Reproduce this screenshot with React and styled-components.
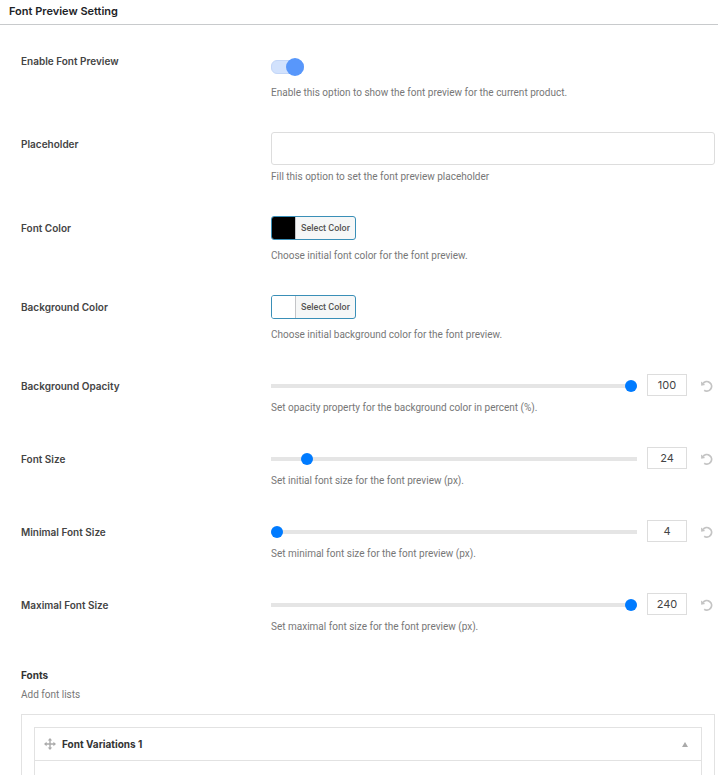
import { useState } from "react";
import styled, { createGlobalStyle } from "styled-components";

const SLIDERS = [
    { id: "opacity", label: "Background Opacity", initial: 100, min: 0, max: 100, help: "Set opacity property for the background color in percent (%)." },
    { id: "size", label: "Font Size", initial: 24, min: 4, max: 240, help: "Set initial font size for the font preview (px)." },
    { id: "min-size", label: "Minimal Font Size", initial: 4, min: 4, max: 240, help: "Set minimal font size for the font preview (px)." },
    { id: "max-size", label: "Maximal Font Size", initial: 240, min: 4, max: 240, help: "Set maximal font size for the font preview (px)." },
];

const COLORS = [
    { id: "font-color", label: "Font Color", color: "#000000", help: "Choose initial font color for the font preview." },
    { id: "bg-color", label: "Background Color", color: "#ffffff", help: "Choose initial background color for the font preview." },
];

const ResetIcon = () => (
    <svg width="13" height="12" viewBox="0 0 13 12" fill="none" aria-hidden="true">
        <path d="M3 3.6A4.7 4.7 0 1 1 4.2 10.2" stroke="currentColor" strokeWidth="1.8" />
        <path d="M1 1.6L1.2 5.8L5.2 5Z" fill="currentColor" />
    </svg>
);

const MoveIcon = () => (
    <svg width="12" height="12" viewBox="0 0 12 12" fill="currentColor" aria-hidden="true">
        <path d="M6 0L8.2 2.6H6.7V5.3H9.4V3.8L12 6L9.4 8.2V6.7H6.7V9.4H8.2L6 12L3.8 9.4H5.3V6.7H2.6V8.2L0 6L2.6 3.8V5.3H5.3V2.6H3.8Z" />
    </svg>
);

const SliderField = ({ id, label, initial, min, max, help }) => {
    const [value, setValue] = useState(initial);
    const handleChange = (e) => setValue(e.target.value);

    return (
        <Row>
            <Label htmlFor={id}>{label}</Label>
            <div>
                <SliderControl>
                    <Range type="range" id={id} min={min} max={max} value={value} onChange={handleChange} />
                    <NumberInput type="text" inputMode="numeric" aria-label={label + " value"} value={value} onChange={handleChange} />
                    <ResetButton type="button" aria-label={"Reset " + label} onClick={() => setValue(initial)}>
                        <ResetIcon />
                    </ResetButton>
                </SliderControl>
                <Help>{help}</Help>
            </div>
        </Row>
    );
};

const App = () => {
    const [enabled, setEnabled] = useState(true);
    const [placeholder, setPlaceholder] = useState("");
    const [open, setOpen] = useState(true);

    return (
        <>
            <GlobalStyle />
            <Header>
                <h2>Font Preview Setting</h2>
            </Header>
            <Fields>
                <Row>
                    <Label htmlFor="enable">Enable Font Preview</Label>
                    <div>
                        <ToggleControl>
                            <Toggle type="checkbox" id="enable" checked={enabled} onChange={(e) => setEnabled(e.target.checked)} />
                        </ToggleControl>
                        <Help>Enable this option to show the font preview for the current product.</Help>
                    </div>
                </Row>
                <Row>
                    <Label htmlFor="placeholder">Placeholder</Label>
                    <div>
                        <TextInput type="text" id="placeholder" value={placeholder} onChange={(e) => setPlaceholder(e.target.value)} />
                        <Help>Fill this option to set the font preview placeholder</Help>
                    </div>
                </Row>
                {COLORS.map((item) => (
                    <Row key={item.id}>
                        <Label htmlFor={item.id}>{item.label}</Label>
                        <div>
                            <ColorControl>
                                <ColorButton type="button" id={item.id}>
                                    <Swatch $color={item.color} />
                                    <ColorText>Select Color</ColorText>
                                </ColorButton>
                            </ColorControl>
                            <Help>{item.help}</Help>
                        </div>
                    </Row>
                ))}
                {SLIDERS.map((item) => (
                    <SliderField key={item.id} {...item} />
                ))}
            </Fields>
            <Fonts>
                <h3>Fonts</h3>
                <Help>Add font lists</Help>
                <FontList>
                    <Variation>
                        <VariationHeader type="button" aria-expanded={open} onClick={() => setOpen(!open)}>
                            <MoveIcon />
                            <span>Font Variations 1</span>
                            <Caret $open={open} />
                        </VariationHeader>
                        {open && <VariationBody />}
                    </Variation>
                </FontList>
            </Fonts>
        </>
    );
};

const GlobalStyle = createGlobalStyle`
    * {
        box-sizing: border-box;
    }

    html {
        scrollbar-width: none;
    }

    body {
        margin: 0;
        background: #fff;
        color: #444;
        font-family: Inter, "Liberation Sans", sans-serif;
        font-size: 10px;
        line-height: 16px;
    }

    button, input {
        font-family: inherit;
        color: inherit;
        margin: 0;
    }
`;

const Header = styled.header`
    padding: 3px 9px 5px;
    border-bottom: 1px solid #c8cacc;

    h2 {
        margin: 0;
        font-size: 11px;
        font-weight: 600;
        color: #1d2327;
    }
`;

const Fields = styled.div`
    padding: 8px 3px 0 21px;
`;

const Row = styled.div`
    display: grid;
    grid-template-columns: 250px 1fr;
    padding: 16px 0 15px;
`;

const Label = styled.label`
    padding-top: 4px;
    font-weight: 600;
`;

const Help = styled.p`
    margin: 0;
    padding-top: 1px;
    font-family: Roboto, sans-serif;
    color: #777;
`;

const ToggleControl = styled.div`
    display: flex;
    padding: 9px 0 8px;
`;

const Toggle = styled.input`
    appearance: none;
    display: grid;
    align-items: center;
    width: 33px;
    height: 18px;
    cursor: pointer;

    &::before, &::after {
        content: "";
        grid-area: 1 / 1;
    }

    &::before {
        height: 12px;
        border: 1px solid #c3d6f8;
        border-radius: 6px;
        background: #d2e2fd;
    }

    &::after {
        width: 18px;
        height: 18px;
        border-radius: 50%;
        background: #5897fb;
        justify-self: start;
    }

    &:checked::after {
        justify-self: end;
    }
`;

const TextInput = styled.input`
    display: block;
    width: 100%;
    height: 33px;
    margin-bottom: 3px;
    padding: 0 8px;
    border: 1px solid #ddd;
    border-radius: 3px;
    background: #fff;
`;

const ColorControl = styled.div`
    display: flex;
    padding-bottom: 7px;
`;

const ColorButton = styled.button`
    display: flex;
    height: 24px;
    padding: 0;
    border: 1px solid #3a8fb7;
    border-radius: 3px;
    background: #f6f7f7;
    overflow: hidden;
    cursor: pointer;
`;

const Swatch = styled.span`
    width: 23px;
    height: 22px;
    background: ${(props) => props.$color};
`;

const ColorText = styled.span`
    padding: 0 5px;
    border-left: 1px solid #c3c4c7;
    font-family: Roboto, sans-serif;
    font-size: 9px;
    font-weight: 500;
    line-height: 22px;
    color: #555;
`;

const SliderControl = styled.div`
    display: flex;
    align-items: flex-start;
    gap: 10px;
    padding-bottom: 1px;
`;

const Range = styled.input`
    appearance: none;
    flex: 1;
    min-width: 0;
    height: 24px;
    background: transparent;
    cursor: pointer;

    &::-webkit-slider-runnable-track {
        height: 4px;
        background: #e5e5e5;
    }

    &::-webkit-slider-thumb {
        appearance: none;
        width: 12px;
        height: 12px;
        margin-top: -4px;
        border-radius: 50%;
        background: #007bff;
    }
`;

const NumberInput = styled.input`
    width: 40px;
    height: 22px;
    padding: 0;
    border: 1px solid #ddd;
    background: #fff;
    font-size: 11px;
    text-align: center;
`;

const ResetButton = styled.button`
    display: flex;
    align-items: center;
    justify-content: flex-end;
    width: 18px;
    height: 24px;
    padding: 0 2px 0 0;
    border: none;
    background: none;
    color: #c4c4c4;
    cursor: pointer;
`;

const Fonts = styled.section`
    padding: 17px 3px 0 21px;

    h3 {
        margin: 0 0 3px;
        font-size: 10px;
        font-weight: 700;
        color: #333;
    }
`;

const FontList = styled.div`
    margin-top: 11px;
    padding: 12px;
    border: 1px solid #e2e2e2;
`;

const Variation = styled.div`
    border: 1px solid #e2e2e2;
`;

const VariationHeader = styled.button`
    display: flex;
    align-items: center;
    gap: 6px;
    width: 100%;
    height: 32px;
    padding: 0 13px 0 9px;
    border: none;
    background: #fff;
    font-size: 10px;
    font-weight: 700;
    color: #333;
    cursor: pointer;

    svg {
        color: #aaa;
    }
`;

const Caret = styled.i`
    margin-left: auto;
    border: solid transparent;
    border-width: 0 3px 5px;
    border-bottom-color: #aaa;
    transform: ${(props) => (props.$open ? "none" : "rotate(180deg)")};
`;

const VariationBody = styled.div`
    height: 60px;
    border-top: 1px solid #e2e2e2;
`;

export default App;
